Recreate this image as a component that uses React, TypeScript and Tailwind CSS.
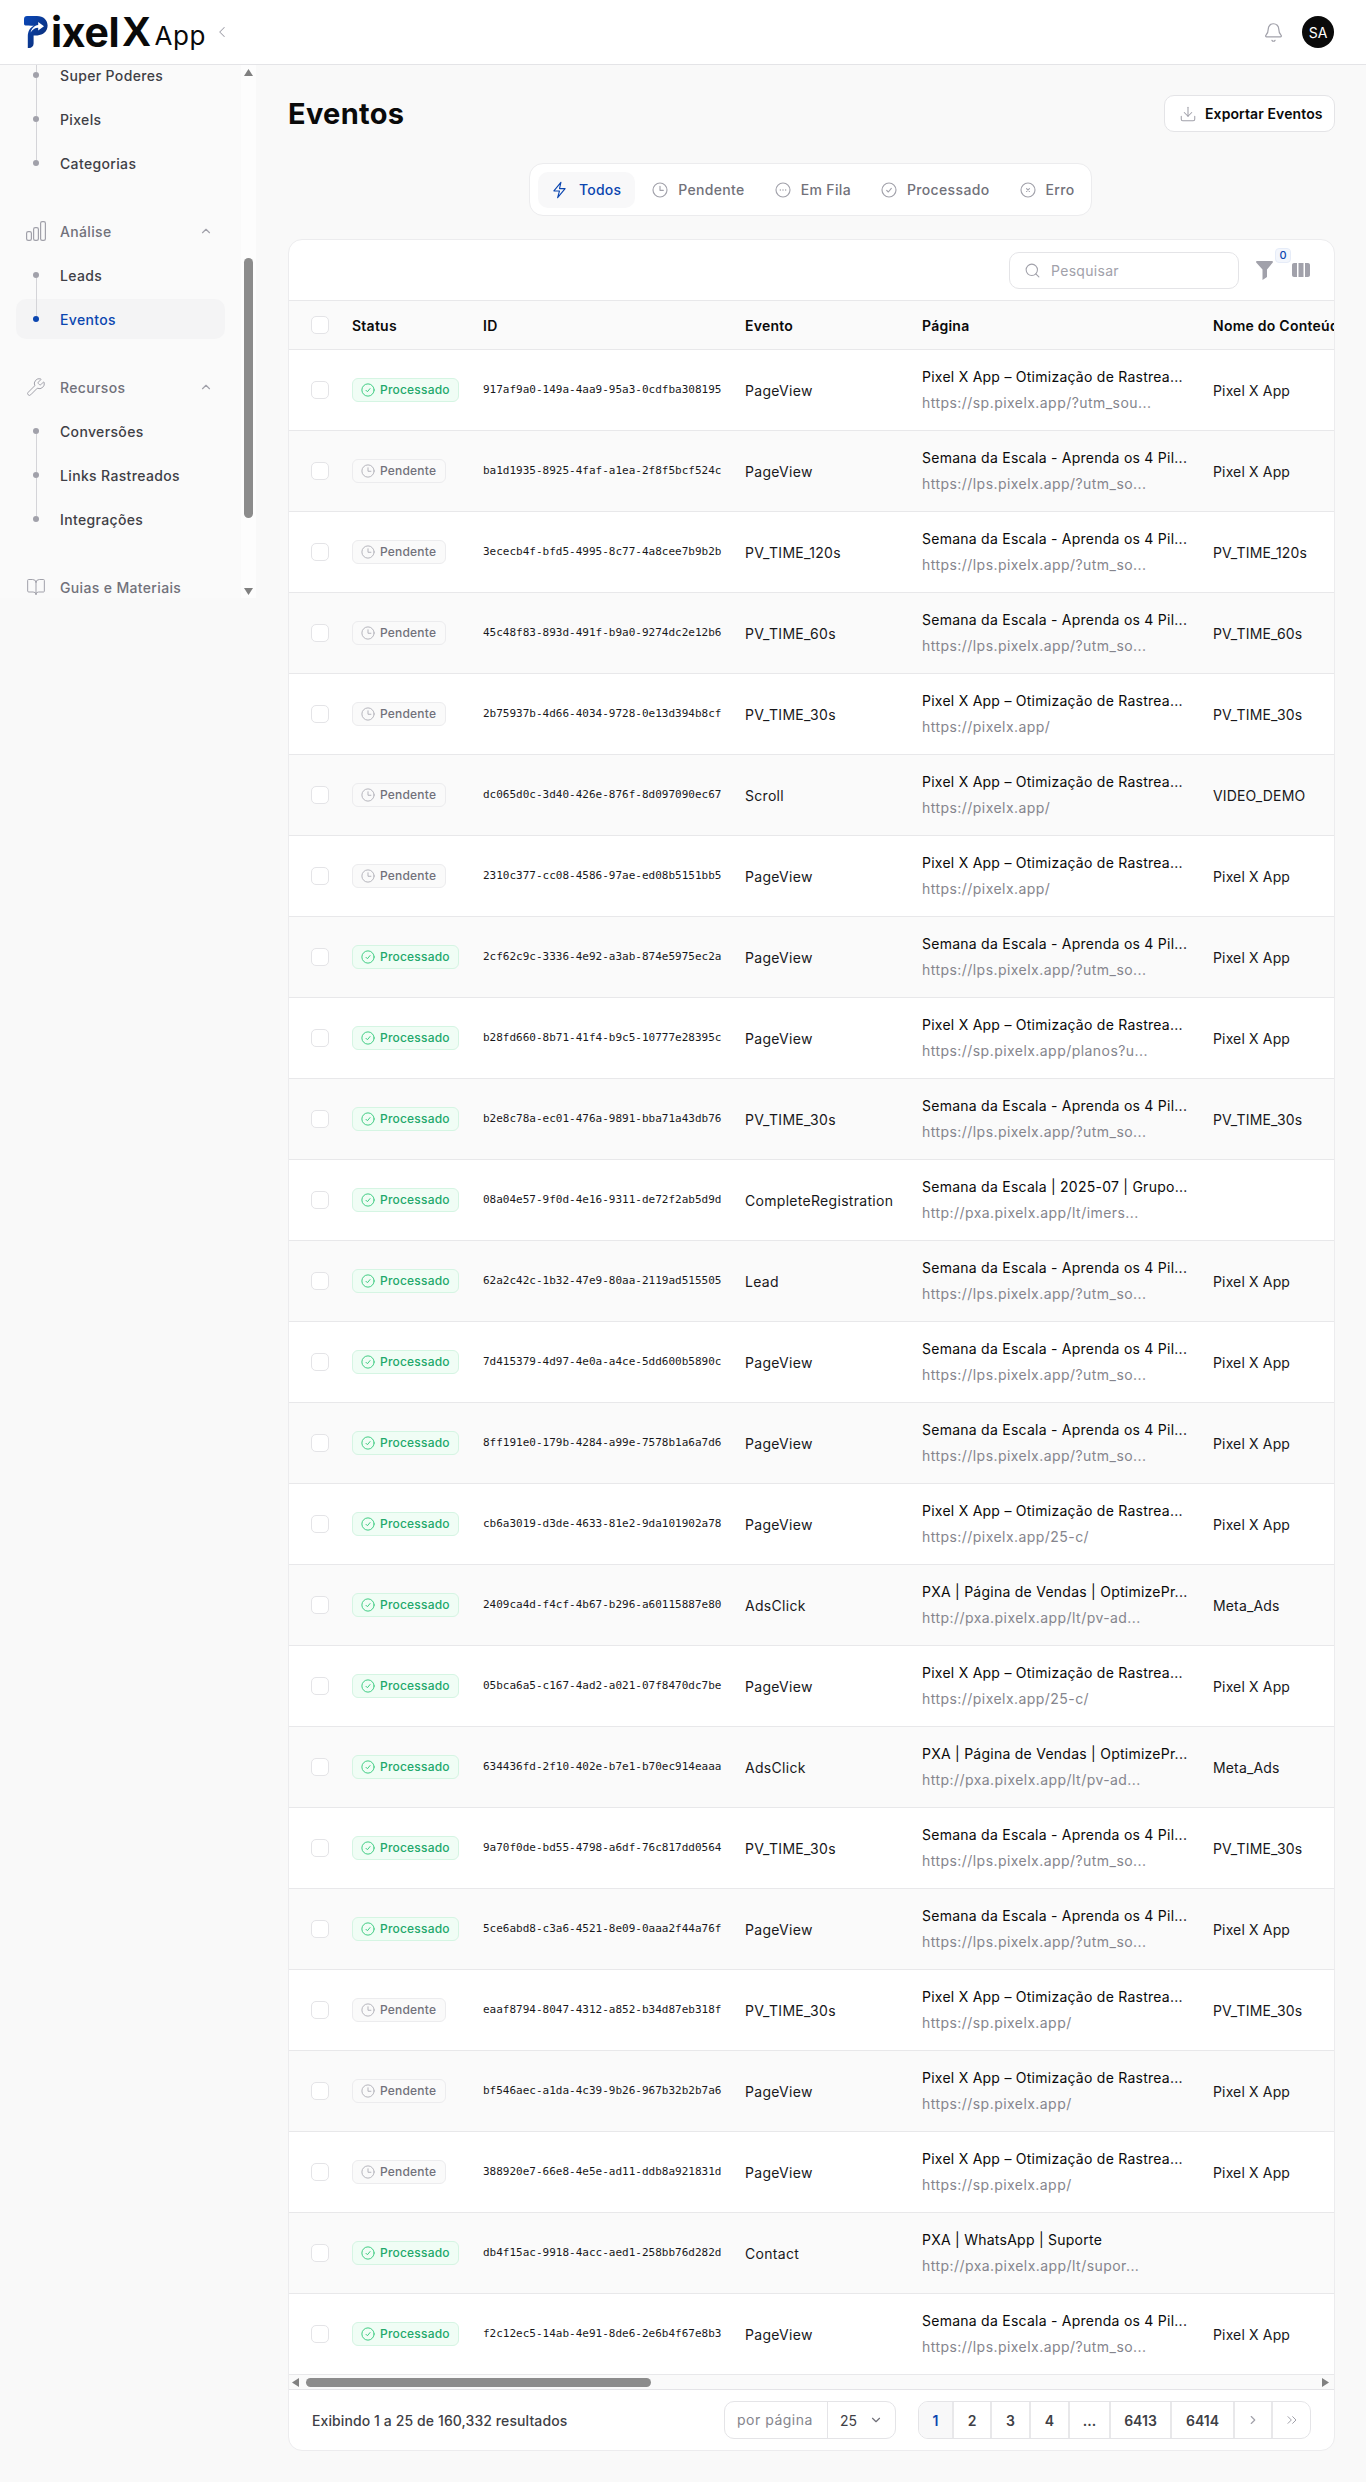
import type { ReactNode } from "react";
import {
  Bell,
  BookOpen,
  ChevronDown,
  ChevronLeft,
  ChevronRight,
  ChevronUp,
  ChevronsRight,
  Download,
  Search,
  Wrench,
} from "lucide-react";

type Row = [boolean, string, string, number, string, string];

const PIXEL = "Pixel X App – Otimização de Rastrea...";
const SEMANA = "Semana da Escala - Aprenda os 4 Pil...";
const GRUPO = "Semana da Escala | 2025-07 | Grupo...";
const VENDAS = "PXA | Página de Vendas | OptimizePr...";
const LPS = "https://lps.pixelx.app/?utm_so...";
const SITE = "https://pixelx.app/";
const SP = "https://sp.pixelx.app/";
const C25 = "https://pixelx.app/25-c/";
const ADS = "http://pxa.pixelx.app/lt/pv-ad...";
const APP = "Pixel X App";

const titles = [PIXEL, SEMANA, GRUPO, VENDAS, "PXA | WhatsApp | Suporte"];

const rows: Row[] = [
  [true, "917af9a0-149a-4aa9-95a3-0cdfba308195", "PageView", 0, "https://sp.pixelx.app/?utm_sou...", APP],
  [false, "ba1d1935-8925-4faf-a1ea-2f8f5bcf524c", "PageView", 1, LPS, APP],
  [false, "3ececb4f-bfd5-4995-8c77-4a8cee7b9b2b", "PV_TIME_120s", 1, LPS, "PV_TIME_120s"],
  [false, "45c48f83-893d-491f-b9a0-9274dc2e12b6", "PV_TIME_60s", 1, LPS, "PV_TIME_60s"],
  [false, "2b75937b-4d66-4034-9728-0e13d394b8cf", "PV_TIME_30s", 0, SITE, "PV_TIME_30s"],
  [false, "dc065d0c-3d40-426e-876f-8d097090ec67", "Scroll", 0, SITE, "VIDEO_DEMO"],
  [false, "2310c377-cc08-4586-97ae-ed08b5151bb5", "PageView", 0, SITE, APP],
  [true, "2cf62c9c-3336-4e92-a3ab-874e5975ec2a", "PageView", 1, LPS, APP],
  [true, "b28fd660-8b71-41f4-b9c5-10777e28395c", "PageView", 0, "https://sp.pixelx.app/planos?u...", APP],
  [true, "b2e8c78a-ec01-476a-9891-bba71a43db76", "PV_TIME_30s", 1, LPS, "PV_TIME_30s"],
  [true, "08a04e57-9f0d-4e16-9311-de72f2ab5d9d", "CompleteRegistration", 2, "http://pxa.pixelx.app/lt/imers...", ""],
  [true, "62a2c42c-1b32-47e9-80aa-2119ad515505", "Lead", 1, LPS, APP],
  [true, "7d415379-4d97-4e0a-a4ce-5dd600b5890c", "PageView", 1, LPS, APP],
  [true, "8ff191e0-179b-4284-a99e-7578b1a6a7d6", "PageView", 1, LPS, APP],
  [true, "cb6a3019-d3de-4633-81e2-9da101902a78", "PageView", 0, C25, APP],
  [true, "2409ca4d-f4cf-4b67-b296-a60115887e80", "AdsClick", 3, ADS, "Meta_Ads"],
  [true, "05bca6a5-c167-4ad2-a021-07f8470dc7be", "PageView", 0, C25, APP],
  [true, "634436fd-2f10-402e-b7e1-b70ec914eaaa", "AdsClick", 3, ADS, "Meta_Ads"],
  [true, "9a70f0de-bd55-4798-a6df-76c817dd0564", "PV_TIME_30s", 1, LPS, "PV_TIME_30s"],
  [true, "5ce6abd8-c3a6-4521-8e09-0aaa2f44a76f", "PageView", 1, LPS, APP],
  [false, "eaaf8794-8047-4312-a852-b34d87eb318f", "PV_TIME_30s", 0, SP, "PV_TIME_30s"],
  [false, "bf546aec-a1da-4c39-9b26-967b32b2b7a6", "PageView", 0, SP, APP],
  [false, "388920e7-66e8-4e5e-ad11-ddb8a921831d", "PageView", 0, SP, APP],
  [true, "db4f15ac-9918-4acc-aed1-258bb76d282d", "Contact", 4, "http://pxa.pixelx.app/lt/supor...", ""],
  [true, "f2c12ec5-14ab-4e91-8de6-2e6b4f67e8b3", "PageView", 1, LPS, APP],
];

const Round = ({ className, children }: { className: string; children: ReactNode }) => (
  <svg viewBox="0 0 24 24" fill="none" stroke="currentColor" strokeWidth="1.7" strokeLinecap="round" strokeLinejoin="round" className={className}>
    <circle cx="12" cy="12" r="10.5" />
    {children}
  </svg>
);

const ClockIcon = ({ className }: { className: string }) => (
  <Round className={className}>
    <path d="M12 6.5V12.5H17" />
  </Round>
);

const CheckIcon = ({ className }: { className: string }) => (
  <Round className={className}>
    <path d="M8.5 12.5L11 15L15.5 9.5" />
  </Round>
);

const SubItem = ({ label, first, last, active }: { label: string; first?: boolean; last?: boolean; active?: boolean }) => (
  <div className={`flex h-[44px] items-center gap-5 pl-4 ${active ? "relative" : ""}`}>
    {active && <div className="absolute inset-x-0 top-[2px] h-[40px] rounded-[10px] bg-[#f4f4f5]" />}
    <div className="relative flex h-full w-2 flex-col items-center">
      <div className={`w-px flex-1 ${first ? "" : "bg-[#d4d4d8]"}`} />
      <div className={`h-[6px] w-[6px] rounded-full ${active ? "bg-[#0b46b0]" : "bg-[#a1a1aa]"}`} />
      <div className={`w-px flex-1 ${last ? "" : "bg-[#d4d4d8]"}`} />
    </div>
    <span className={`relative text-[14px] font-medium tracking-[0.35px] ${active ? "text-[#0b46b0]" : "text-[#3f3f46]"}`}>{label}</span>
  </div>
);

const SectionHead = ({ icon, label, open }: { icon: ReactNode; label: string; open?: boolean }) => (
  <div className="flex h-[44px] items-center pl-[10px] pr-[12px] text-[#71717a]">
    <div className="w-5 text-[#a1a1aa]">{icon}</div>
    <span className="ml-[14px] flex-1 text-[14px] font-medium tracking-[0.35px]">{label}</span>
    {open && <ChevronUp className="h-[14px] w-[14px] text-[#a1a1aa]" />}
  </div>
);

const BarsIcon = () => (
  <svg viewBox="0 0 20 20" fill="none" stroke="currentColor" strokeWidth="1.2" className="h-5 w-5">
    <rect x="0.6" y="10.6" width="4.8" height="8.8" rx="1.6" />
    <rect x="7.6" y="6.6" width="4.8" height="12.8" rx="1.6" />
    <rect x="14.6" y="0.6" width="4.8" height="18.8" rx="1.6" />
  </svg>
);

const Triangle = ({ dir }: { dir: "up" | "down" | "left" | "right" }) => {
  const points = { up: "4.5,0 9,7 0,7", down: "0,0 9,0 4.5,7", left: "7,0 7,9 0,4.5", right: "0,0 7,4.5 0,9" }[dir];
  const vert = dir === "up" || dir === "down";
  return (
    <svg viewBox={vert ? "0 0 9 7" : "0 0 7 9"} className={vert ? "h-[7px] w-[9px]" : "h-[9px] w-[7px]"}>
      <polygon points={points} fill="#808080" />
    </svg>
  );
};

const Sidebar = () => (
  <aside className="flex h-[533px] w-[256px] shrink-0 overflow-hidden bg-[#fafafa]">
    <nav className="w-[241px] shrink-0 px-4">
      <div className="-mt-3">
        <SubItem label="Super Poderes" />
        <SubItem label="Pixels" />
        <SubItem label="Categorias" last />
      </div>
      <div className="mt-6">
        <SectionHead icon={<BarsIcon />} label="Análise" open />
        <SubItem label="Leads" first />
        <SubItem label="Eventos" last active />
      </div>
      <div className="mt-6">
        <SectionHead icon={<Wrench className="h-5 w-5" strokeWidth={1.2} />} label="Recursos" open />
        <SubItem label="Conversões" first />
        <SubItem label="Links Rastreados" />
        <SubItem label="Integrações" last />
      </div>
      <div className="mt-6">
        <SectionHead icon={<BookOpen className="h-5 w-5" strokeWidth={1.2} />} label="Guias e Materiais" />
      </div>
    </nav>
    <div className="flex w-[15px] flex-col items-center bg-[#fdfdfd]">
      <div className="mt-1">
        <Triangle dir="up" />
      </div>
      <div className="mt-[182px] h-[260px] w-[9px] rounded-full bg-[#8c8c8c]" />
      <div className="mt-[70px]">
        <Triangle dir="down" />
      </div>
    </div>
  </aside>
);

const Header = () => (
  <header className="flex h-[65px] items-center border-b border-[#e4e4e7] bg-white pl-6 pr-8">
    <svg viewBox="0 0 24 32" className="h-[32px] w-[24px] shrink-0">
      <defs>
        <linearGradient id="logo" x1="0" y1="0" x2="1" y2="1">
          <stop offset="0" stopColor="#0b48b8" />
          <stop offset="1" stopColor="#0a2a6e" />
        </linearGradient>
      </defs>
      <path d="M3 0H13C19.5 0 23.6 4.2 23.6 9.6C23.6 15.4 19 19.4 13.4 19.4H9.6V27.5C9.6 30.4 7.4 32 5.2 32H3.8V20.5C3.8 15.5 6 11.5 10 9.8C6 9.6 2.4 9.4 1.6 9.4C0.6 9.4 0 8.6 0 7.4V3.2C0 1.2 1.2 0 3 0Z" fill="url(#logo)" />
      <path d="M6.6 16.5C7.4 12.4 10.4 9.6 14.2 9V6L20 10.2L14.2 14.6V11.8C11 11.9 8.6 13.6 6.6 16.5Z" fill="#fff" />
    </svg>
    <span className="ml-[3px] text-[41px] font-bold leading-none tracking-[-0.3px] text-[#0a0a0a]">ixel</span>
    <span className="ml-[3px] font-['Liberation_Sans',sans-serif] text-[42px] font-bold leading-none text-[#0a0a0a]">X</span>
    <span className="ml-[4px] mt-[8px] text-[26px] leading-none tracking-[0.6px] text-[#0a0a0a]">App</span>
    <ChevronLeft className="ml-[7px] h-[18px] w-[18px] text-[#a1a1aa]" strokeWidth={1.4} />
    <Bell className="ml-auto h-[21px] w-[21px] text-[#a1a1aa]" strokeWidth={1.4} />
    <div className="ml-[18px] flex h-8 w-8 items-center justify-center rounded-full bg-[#0a0a0a] text-[14px] text-white">SA</div>
  </header>
);

const tabs = [
  { label: "Pendente", icon: <ClockIcon className="h-4 w-4" /> },
  {
    label: "Em Fila",
    icon: (
      <Round className="h-4 w-4">
        <path d="M8 12H8.01M12 12H12.01M16 12H16.01" strokeWidth="2.2" />
      </Round>
    ),
  },
  { label: "Processado", icon: <CheckIcon className="h-4 w-4" /> },
  {
    label: "Erro",
    icon: (
      <Round className="h-4 w-4">
        <path d="M9.8 9.8L14.2 14.2M14.2 9.8L9.8 14.2" />
      </Round>
    ),
  },
];

const Tabs = () => (
  <div className="ml-[241px] mt-[31px] flex h-[53px] w-[563px] items-center gap-[6px] rounded-[14px] border border-[#ececee] bg-white px-2">
    <div className="-mr-px flex h-[36px] shrink-0 items-center gap-[12px] rounded-[10px] bg-[#f8f8f9] px-[14px] text-[#0b46b0]">
      <svg viewBox="0 0 16 18" fill="none" stroke="currentColor" strokeWidth="1.2" strokeLinejoin="round" className="h-[18px] w-[15px]">
        <path d="M9.5 0.8L2 10H8L6 17.2L14 7.5H8Z" />
      </svg>
      <span className="text-[14px] font-medium tracking-[0.2px]">Todos</span>
    </div>
    {tabs.map((tab) => (
      <div key={tab.label} className="flex h-[36px] shrink-0 items-center gap-[10px] px-[12px] text-[#71717a]">
        <span className="text-[#a1a1aa]">{tab.icon}</span>
        <span className="whitespace-nowrap text-[14px] font-medium tracking-[0.35px]">{tab.label}</span>
      </div>
    ))}
  </div>
);

const Toolbar = () => (
  <div className="flex h-[60px] items-center justify-end pr-[24px]">
    <div className="flex h-[37px] w-[230px] items-center gap-[10px] rounded-[10px] border border-[#e4e4e7] pl-[14px]">
      <Search className="h-[17px] w-[17px] text-[#a1a1aa]" strokeWidth={1.5} />
      <span className="text-[14px] tracking-[0.3px] text-[#a1a1aa]">Pesquisar</span>
    </div>
    <div className="relative ml-[17px] mr-[19px]">
      <svg viewBox="0 0 17 19" className="h-[19px] w-[17px]">
        <path d="M1 0H16C16.8 0 17.2 1 16.6 1.7L11 8.5V16L6.5 19V8.5L0.4 1.7C-0.2 1 0.2 0 1 0Z" fill="#a1a1aa" />
      </svg>
      <span className="absolute -right-[18px] -top-[13px] flex h-[15px] w-[16px] items-center justify-center rounded-[4px] border border-[#e6ecf8] bg-[#f3f6fc] text-[11px] font-medium text-[#0b46b0]">0</span>
    </div>
    <svg viewBox="0 0 18 14" className="h-[14px] w-[18px]">
      <path d="M2 0H5V14H2C0.9 14 0 13.1 0 12V2C0 0.9 0.9 0 2 0ZM6.5 0H11.5V14H6.5ZM13 0H16C17.1 0 18 0.9 18 2V12C18 13.1 17.1 14 16 14H13Z" fill="#a1a1aa" />
    </svg>
  </div>
);

const Checkbox = () => <div className="h-[18px] w-[18px] rounded-[5px] border border-[#e4e4e7] bg-white" />;

const Status = ({ done }: { done: boolean }) =>
  done ? (
    <span className="inline-flex h-[24px] w-[107px] items-center gap-[5px] rounded-[6px] border border-[#d5f5e3] bg-[#f0fdf5] pl-[8px] text-[12px] font-medium tracking-[0.2px] text-[#22a86b]">
      <CheckIcon className="h-[14px] w-[14px] text-[#3ecb82]" />
      Processado
    </span>
  ) : (
    <span className="inline-flex h-[24px] w-[94px] items-center gap-[5px] rounded-[6px] border border-[#ececee] bg-[#fafafa] pl-[8px] text-[12px] font-medium tracking-[0.2px] text-[#71717a]">
      <ClockIcon className="h-[14px] w-[14px] text-[#b4b4bb]" />
      Pendente
    </span>
  );

const EventsTable = () => (
  <div className="overflow-hidden">
    <table className="w-[1124px] table-fixed border-collapse text-left">
      <colgroup>
        <col className="w-[63px]" />
        <col className="w-[131px]" />
        <col className="w-[262px]" />
        <col className="w-[177px]" />
        <col className="w-[291px]" />
        <col className="w-[200px]" />
      </colgroup>
      <thead>
        <tr className="h-[49px] border-y border-[#e8e8ea] bg-[#fafafa] text-[14px] tracking-[0.25px] text-[#0a0a0a]">
          <th className="pl-[22px]">
            <Checkbox />
          </th>
          <th className="font-semibold">Status</th>
          <th className="font-semibold">ID</th>
          <th className="font-semibold">Evento</th>
          <th className="font-semibold">Página</th>
          <th className="whitespace-nowrap font-semibold">Nome do Conteúdo</th>
        </tr>
      </thead>
      <tbody>
        {rows.map(([done, id, event, title, url, content], index) => (
          <tr key={id} className={`h-[81px] border-b border-[#e8e8ea] ${index % 2 ? "bg-[#fafafa]" : "bg-white"}`}>
            <td className="pl-[22px]">
              <Checkbox />
            </td>
            <td>
              <Status done={done} />
            </td>
            <td className="font-['DejaVu_Sans_Mono',monospace] text-[11px] text-[#18181b]">{id}</td>
            <td className="whitespace-nowrap text-[14px] tracking-[0.3px] text-[#18181b]">{event}</td>
            <td className="whitespace-nowrap">
              <div className="text-[14px] leading-[26px] tracking-[0.25px] text-[#0a0a0a]">{titles[title]}</div>
              <div className="text-[14px] leading-[26px] tracking-[0.45px] text-[#85858d]">{url}</div>
            </td>
            <td className="whitespace-nowrap text-[14px] tracking-[0.15px] text-[#18181b]">{content}</td>
          </tr>
        ))}
      </tbody>
    </table>
    <div className="flex h-[15px] items-center border-b border-[#e4e4e7] bg-[#fafafa] pl-[3px] pr-[5px]">
      <Triangle dir="left" />
      <div className="ml-[7px] h-[9px] w-[345px] rounded-full bg-[#8c8c8c]" />
      <div className="ml-auto">
        <Triangle dir="right" />
      </div>
    </div>
  </div>
);

const pages = [
  { label: "1", w: "w-[35px] bg-[#f8f8f9] text-[#0b46b0]" },
  { label: "2", w: "w-[38px]" },
  { label: "3", w: "w-[39px]" },
  { label: "4", w: "w-[39px]" },
  { label: "...", w: "w-[41px]" },
  { label: "6413", w: "w-[61px]" },
  { label: "6414", w: "w-[63px]" },
];

const Footer = () => (
  <div className="flex h-[60px] items-center pl-[23px] pr-[23px]">
    <span className="text-[14px] font-medium tracking-[0.1px] text-[#3f3f46]">Exibindo 1 a 25 de 160,332 resultados</span>
    <div className="ml-auto flex h-[38px] w-[172px] items-center rounded-[10px] border border-[#e4e4e7]">
      <span className="w-[103px] border-r border-[#e4e4e7] pl-3 text-[14px] leading-[36px] tracking-[0.5px] text-[#85858d]">por página</span>
      <span className="ml-3 text-[14px] text-[#3f3f46]">25</span>
      <ChevronDown className="ml-auto mr-3 h-[14px] w-[14px] text-[#71717a]" />
    </div>
    <div className="ml-[22px] flex h-[38px] items-center overflow-hidden rounded-[10px] border border-[#e4e4e7] text-[14px] font-semibold text-[#3f3f46]">
      {pages.map((page) => (
        <div key={page.label} className={`flex h-full items-center justify-center border-r-2 border-[#e8e8ea] ${page.w}`}>
          {page.label}
        </div>
      ))}
      <div className="flex h-full w-[38px] items-center justify-center border-r-2 border-[#e8e8ea] text-[#a1a1aa]">
        <ChevronRight className="h-[14px] w-[14px]" />
      </div>
      <div className="flex h-full w-[37px] items-center justify-center text-[#a1a1aa]">
        <ChevronsRight className="h-[16px] w-[16px]" strokeWidth={1.5} />
      </div>
    </div>
  </div>
);

export default function App() {
  return (
    <div className="min-h-[2482px] bg-[#f9f9f9] font-['Inter',sans-serif]">
      <Header />
      <div className="flex">
        <Sidebar />
        <main className="min-w-0 flex-1 pb-8 pl-8 pr-[31px] pt-[30px]">
          <div className="flex items-center justify-between">
            <h1 className="text-[29px] font-bold leading-none tracking-[0.3px] text-[#0a0a0a]">Eventos</h1>
            <button className="flex h-[37px] w-[171px] items-center gap-[8px] rounded-[10px] border border-[#e4e4e7] bg-white pl-[14px] text-[14px] font-semibold tracking-[0.1px] text-[#0a0a0a]">
              <Download className="h-[18px] w-[18px] text-[#a1a1aa]" strokeWidth={1.4} />
              Exportar Eventos
            </button>
          </div>
          <Tabs />
          <div className="mt-[23px] overflow-hidden rounded-[14px] border border-[#ececee] bg-white">
            <Toolbar />
            <EventsTable />
            <Footer />
          </div>
        </main>
      </div>
    </div>
  );
}
